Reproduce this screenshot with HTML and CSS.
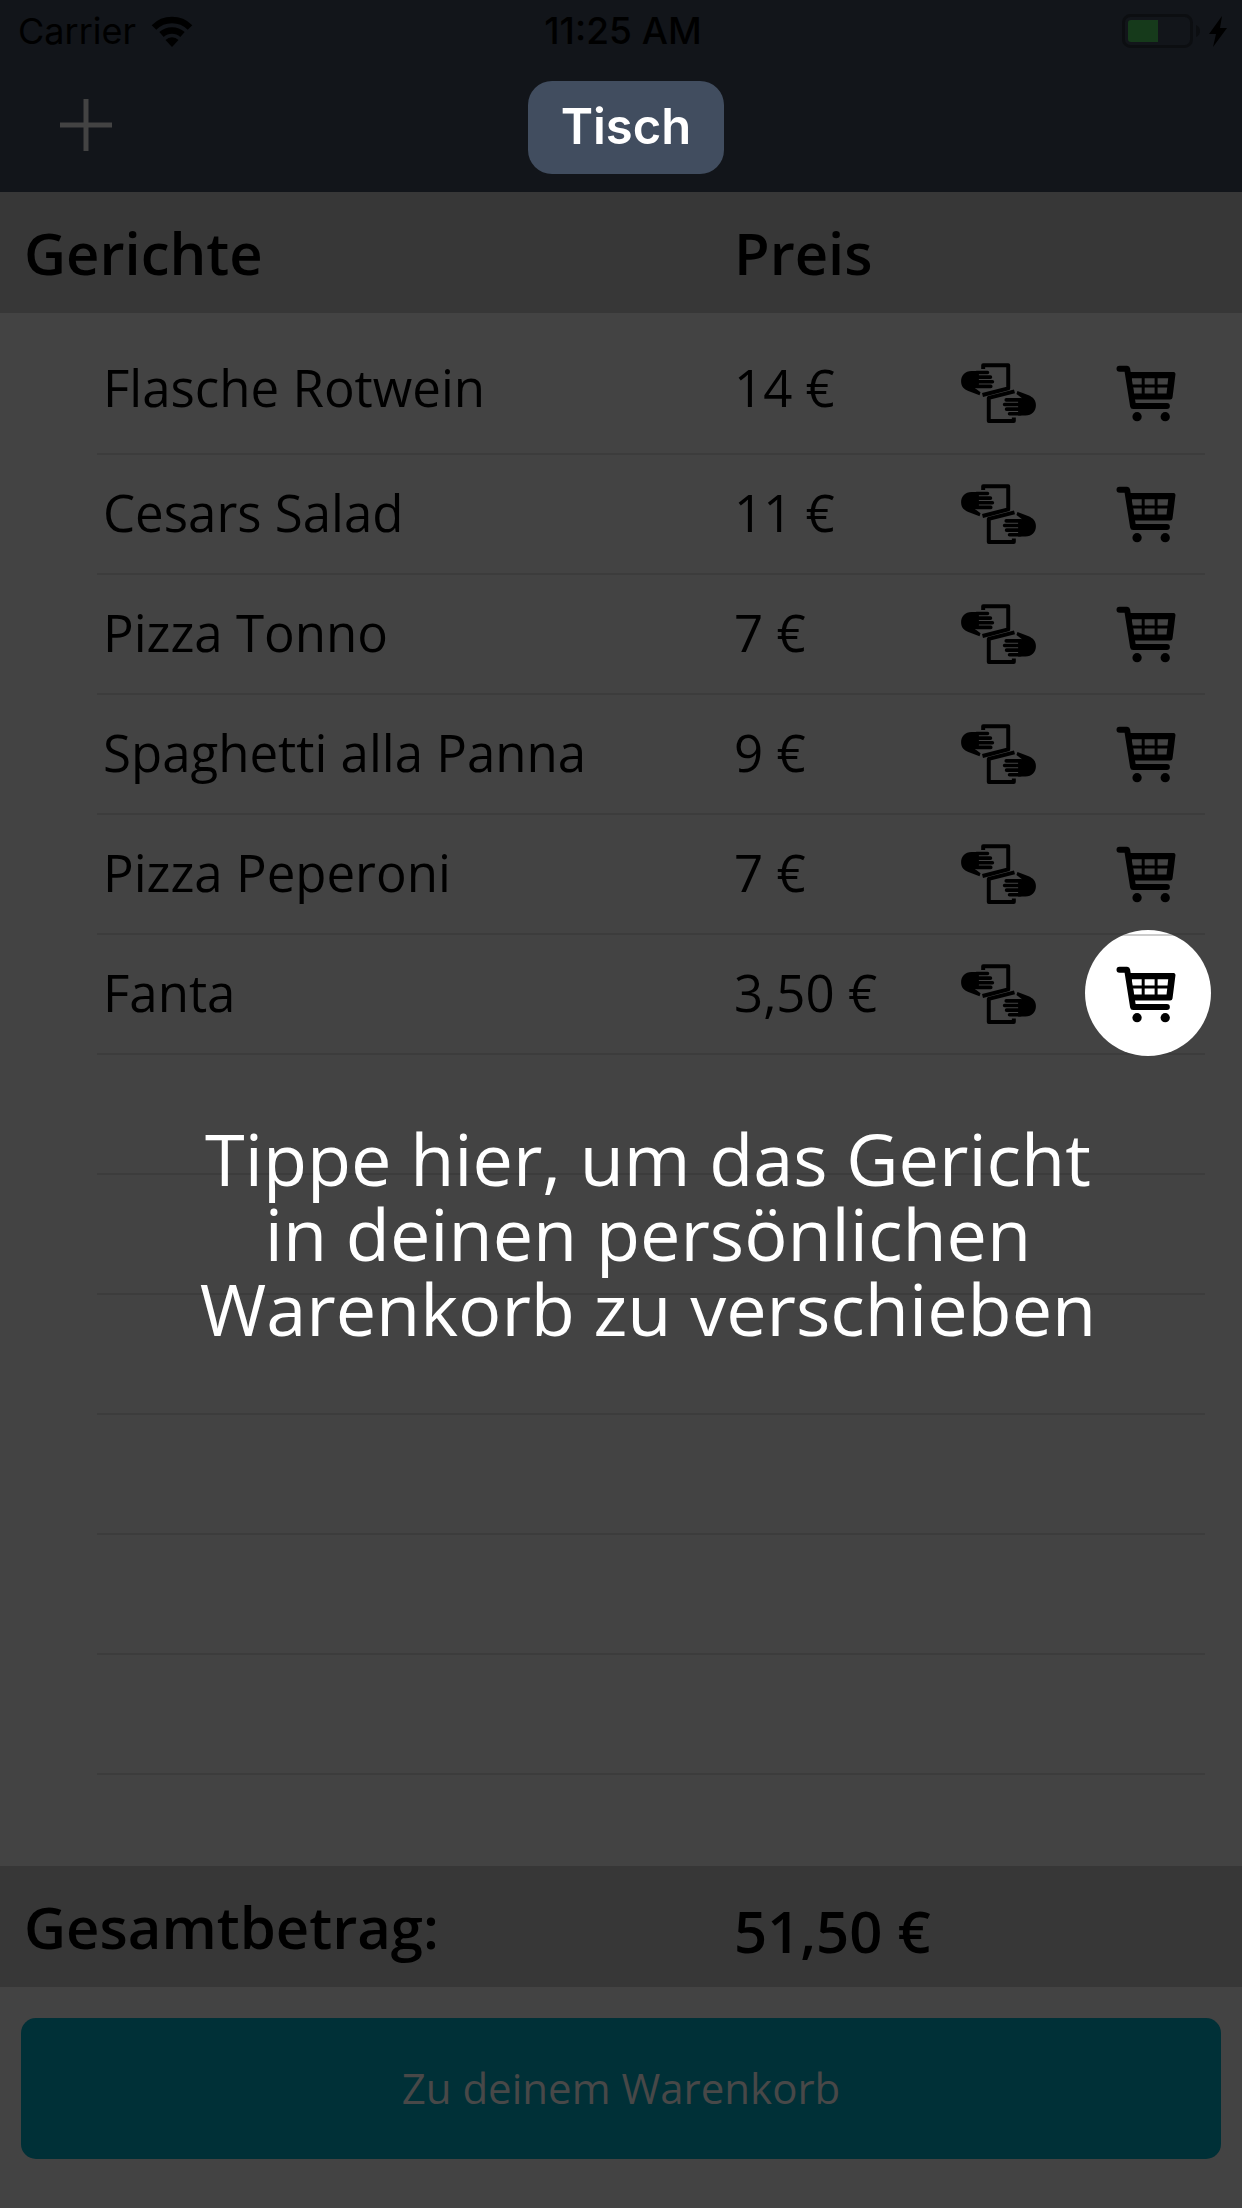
FILE: index.html
```html
<!DOCTYPE html>
<html lang="de">
<head>
<meta charset="utf-8">
<meta name="viewport" content="width=device-width, initial-scale=1">
<title>Tisch</title>
<link rel="stylesheet" href="styles.css">
</head>
<body>
<svg class="sprite" aria-hidden="true">
  <symbol id="share" viewBox="66 70 231 182">
    <g id="half">
      <path d="M135 88V77H211V147L133 167" fill="none" stroke="currentColor" stroke-width="12" stroke-linejoin="round"/>
      <path d="M122 94H100C80 94 68 108 68 125C68 141 77 149 90 155L124 168L127 159L110 146H122Z"/>
      <path d="M115 99H148M115 113H157M115 127H163M115 141H158" fill="none" stroke="currentColor" stroke-width="11" stroke-linecap="round"/>
    </g>
    <use href="#half" transform="rotate(180 181.5 161.5)"/>
  </symbol>
  <symbol id="cart" viewBox="529 74 180 172">
    <path d="M539 85H562L580 198H682" fill="none" stroke="currentColor" stroke-width="18" stroke-linecap="round" stroke-linejoin="round"/>
    <path fill-rule="evenodd" d="M560 95H702Q708 95 708 101L699 172Q698 178 692 178H574ZM576 114V133H606V114ZM615 114V133H645V114ZM654 114V133H684L686 114ZM580 142L582 160H606V142ZM615 142V160H645V142ZM654 142V160H681L683 142Z"/>
    <circle cx="592" cy="230" r="14"/>
    <circle cx="677" cy="230" r="14"/>
  </symbol>
</svg>

<header class="top">
  <div class="status">
    <span class="carrier">Carrier
      <svg class="wifi" viewBox="0 0 42 31" aria-hidden="true">
        <path d="M21 31L14.500 24A9 9 0 0 1 27.500 24Z"/>
        <path d="M3 11.500A25.500 25.500 0 0 1 39 11.500M10.500 18.500A15.500 15.500 0 0 1 31.500 18.500" fill="none" stroke="currentColor" stroke-width="6.500"/>
      </svg>
    </span>
    <span class="time">11:25 AM</span>
    <svg class="battery" viewBox="0 0 106 34" aria-hidden="true">
      <rect x="1.500" y="1.500" width="68" height="31" rx="7" fill="none" stroke="#0c0e11" stroke-width="3"/>
      <path d="M9 6H36V28H9Q6 28 6 25V9Q6 6 9 6Z" fill="#163a1b"/>
      <path d="M74 11Q78 13 78 17Q78 21 74 23Z" fill="#0c0e11"/>
      <path d="M100 2L87 20H94L91 33L105 14H98Z"/>
    </svg>
  </div>
  <nav class="bar">
    <button class="add" type="button" aria-label="Hinzufügen">
      <svg viewBox="0 0 52 52" aria-hidden="true"><path d="M0 26H52M26 0V52" stroke="currentColor" stroke-width="5"/></svg>
    </button>
    <h1 class="title">Tisch</h1>
  </nav>
</header>

<main class="order">
  <table class="dishes">
    <colgroup>
      <col class="col-lead"><col><col class="col-price"><col class="col-share"><col class="col-cart"><col class="col-end">
    </colgroup>
    <thead>
      <tr><th colspan="2" scope="col">Gerichte</th><th class="price" colspan="4" scope="col">Preis</th></tr>
    </thead>
    <tbody>
      <tr class="first"><td></td><td class="name">Flasche Rotwein</td><td class="price">14 €</td>
        <td class="act"><button type="button" aria-label="Teilen"><svg class="i-share"><use href="#share"/></svg></button></td>
        <td class="act"><button class="cart" type="button" aria-label="In den Warenkorb"><svg class="i-cart"><use href="#cart"/></svg></button></td><td></td></tr>
      <tr><td></td><td class="name">Cesars Salad</td><td class="price">11 €</td>
        <td class="act"><button type="button" aria-label="Teilen"><svg class="i-share"><use href="#share"/></svg></button></td>
        <td class="act"><button class="cart" type="button" aria-label="In den Warenkorb"><svg class="i-cart"><use href="#cart"/></svg></button></td><td></td></tr>
      <tr><td></td><td class="name">Pizza Tonno</td><td class="price">7 €</td>
        <td class="act"><button type="button" aria-label="Teilen"><svg class="i-share"><use href="#share"/></svg></button></td>
        <td class="act"><button class="cart" type="button" aria-label="In den Warenkorb"><svg class="i-cart"><use href="#cart"/></svg></button></td><td></td></tr>
      <tr><td></td><td class="name">Spaghetti alla Panna</td><td class="price">9 €</td>
        <td class="act"><button type="button" aria-label="Teilen"><svg class="i-share"><use href="#share"/></svg></button></td>
        <td class="act"><button class="cart" type="button" aria-label="In den Warenkorb"><svg class="i-cart"><use href="#cart"/></svg></button></td><td></td></tr>
      <tr><td></td><td class="name">Pizza Peperoni</td><td class="price">7 €</td>
        <td class="act"><button type="button" aria-label="Teilen"><svg class="i-share"><use href="#share"/></svg></button></td>
        <td class="act"><button class="cart" type="button" aria-label="In den Warenkorb"><svg class="i-cart"><use href="#cart"/></svg></button></td><td></td></tr>
      <tr><td></td><td class="name">Fanta</td><td class="price">3,50 €</td>
        <td class="act"><button type="button" aria-label="Teilen"><svg class="i-share"><use href="#share"/></svg></button></td>
        <td class="act"><button class="cart spot" type="button" aria-label="In den Warenkorb"><svg class="i-cart"><use href="#cart"/></svg></button></td><td></td></tr>
      <tr><td></td><td class="blank" colspan="4"></td><td></td></tr>
      <tr><td></td><td class="blank" colspan="4"></td><td></td></tr>
      <tr><td></td><td class="blank" colspan="4"></td><td></td></tr>
      <tr><td></td><td class="blank" colspan="4"></td><td></td></tr>
      <tr><td></td><td class="blank" colspan="4"></td><td></td></tr>
      <tr><td></td><td class="blank" colspan="4"></td><td></td></tr>
      <tr class="last"><td colspan="6"></td></tr>
    </tbody>
    <tfoot>
      <tr><th colspan="2" scope="row">Gesamtbetrag:</th><td class="price" colspan="4">51,50 €</td></tr>
    </tfoot>
  </table>
  <p class="hint">Tippe hier, um das Gericht<br>in deinen persönlichen<br>Warenkorb zu verschieben</p>
</main>

<footer class="foot">
  <button class="checkout" type="button">Zu deinem Warenkorb</button>
</footer>
</body>
</html>
```
FILE: styles.css
```css
* {
  box-sizing: border-box;
}

body {
  margin: 0;
  min-height: 100vh;
  display: flex;
  flex-direction: column;
  background: #434343;
  color: #000;
  font-family: "Open Sans", "Noto Sans", sans-serif;
}

button {
  padding: 0;
  border: 0;
  background: none;
  color: inherit;
  font: inherit;
}

svg {
  display: block;
  fill: currentColor;
}

.sprite {
  position: absolute;
  width: 0;
  height: 0;
}

/* Status and navigation bar */

.top {
  height: 192px;
  background: #12151a;
  font-family: Inter, "Liberation Sans", sans-serif;
}

.status {
  display: grid;
  grid-template-columns: 1fr auto 1fr;
  align-items: center;
  height: 60px;
  padding: 1px 14px 0 18px;
  font-size: 36px;
  line-height: 60px;
}

.carrier {
  display: flex;
  align-items: center;
  gap: 15px;
}

.wifi {
  width: 42px;
  height: 31px;
}

.time {
  font-size: 37px;
  font-weight: 500;
}

.battery {
  justify-self: end;
  width: 106px;
  height: 34px;
}

.bar {
  display: grid;
  grid-template-columns: 1fr auto 1fr;
  align-items: start;
  padding: 21px 50px 0 60px;
}

.add {
  justify-self: start;
  margin-top: 18px;
  color: #434343;
}

.add svg {
  width: 52px;
  height: 52px;
}

.title {
  margin: 0;
  padding: 0 33px 2px;
  border-radius: 24px;
  background: #414d5f;
  color: #fff;
  font-size: 49px;
  font-weight: 600;
  line-height: 91px;
}

/* Order table */

.order {
  position: relative;
  flex: 1;
}

.dishes {
  width: 100%;
  table-layout: fixed;
  border-collapse: separate;
  border-spacing: 0;
  font-size: 51px;
  line-height: 72px;
}

.col-lead { width: 97px; }
.col-price { width: 173px; }
.col-share { width: 184px; }
.col-cart { width: 114px; }
.col-end { width: 37px; }

.dishes th,
.dishes td {
  height: 120px;
  padding: 0;
  text-align: left;
  white-space: nowrap;
}

.dishes thead th,
.dishes tfoot th,
.dishes tfoot td {
  height: 121px;
  background: #373737;
  font-size: 58px;
  font-weight: 600;
}

.dishes thead th:first-child,
.dishes tfoot th {
  padding-left: 24px;
}

.dishes tfoot .price {
  padding-top: 8px;
}

.dishes tbody .name,
.dishes tbody .price,
.dishes tbody .act,
.dishes tbody .blank {
  border-bottom: 2px solid #3c3c3c;
}

.dishes tbody .name,
.dishes tbody .price {
  padding-bottom: 4px;
}

.dishes tbody .name {
  padding-left: 6px;
}

.dishes .first td {
  height: 142px;
  padding-top: 20px;
}

.dishes tbody.first .name,
.dishes .first .name,
.dishes .first .price {
  padding-top: 12px;
}

.dishes .last td {
  height: 91px;
}

.act button {
  display: grid;
  place-items: center;
  width: 126px;
  height: 60px;
  margin: 0 auto;
}

.act .cart {
  margin: 0 -6px;
  padding-right: 4px;
}

.i-share {
  width: 77px;
  height: 60px;
}

.i-cart {
  width: 60px;
  height: 57px;
}

.act .spot {
  position: relative;
}

.spot::before {
  content: "";
  position: absolute;
  inset: -34px 0 -32px;
  border-radius: 50%;
  background: linear-gradient(#fff 4px, #ccc 4px, #ccc 6px, #fff 6px);
}

.spot svg {
  position: relative;
}

.hint {
  position: absolute;
  top: 929px;
  left: 54px;
  right: 0;
  margin: 0;
  color: #fff;
  font-size: 72px;
  line-height: 75px;
  text-align: center;
}

/* Checkout */

.foot {
  padding: 30px 21px 49px;
}

.checkout {
  width: 100%;
  height: 141px;
  padding-bottom: 3px;
  border-radius: 15px;
  background: #003037;
  color: #484848;
  font-size: 42px;
}
```
